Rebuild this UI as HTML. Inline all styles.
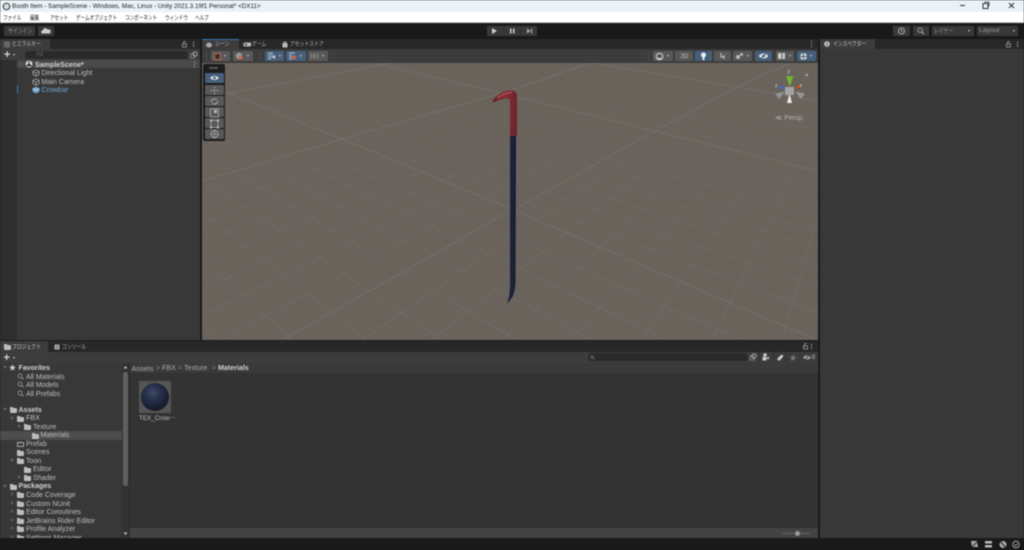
<!DOCTYPE html>
<html lang="ja"><head><meta charset="utf-8"><title>Unity</title>
<style>
html,body{margin:0;padding:0;background:#191919;}
#p{position:relative;width:1024px;height:550px;overflow:hidden;background:#191919;font-family:"Liberation Sans","Noto Sans CJK JP",sans-serif;filter:blur(.4px);}
#p div,#p span.t,#p svg{position:absolute;}
.t{position:absolute;white-space:nowrap;line-height:1;font-size:7.1px;color:#bdbdbd;margin-top:.5px;}
.j{font-size:6.200px;transform:scaleX(.78);transform-origin:left center;margin-top:1px;}
.b{font-weight:bold;color:#d0d0d0;}
.m{font-size:6.200px;color:#222;top:15.500px;transform:scaleX(.74);transform-origin:left center;margin-top:0;}
.btn{background:#383838;top:26px;height:10px;}
.sb{background:#585858;top:51px;height:10px;border-radius:1px;}
.bl{background:#46607c;}
.tb{left:205px;width:19px;height:10px;background:#585858;border-radius:1px;}
.f{width:7px;height:5px;background:#bdbdbd;border-radius:0 1px 1px 1px;}
.f::before{content:"";position:absolute;left:0;top:-1px;width:3px;height:1px;background:#bdbdbd;}
.o{background:none;border:1px solid #aaa;width:5px;height:3px;}
.a{width:0;height:0;border-left:2px solid transparent;border-right:2px solid transparent;border-top:3px solid #5e5e5e;}
.r{width:0;height:0;border-top:2px solid transparent;border-bottom:2px solid transparent;border-left:3px solid #5e5e5e;}
.w{width:0;height:0;border-left:1.500px solid transparent;border-right:1.500px solid transparent;border-top:2px solid #c4c4c4;}
</style></head><body><div id="p">

<!-- title bar -->
<div style="left:0;top:0;width:1024px;height:12px;background:#e9f2f7"></div>
<div style="left:0;top:12px;width:1024px;height:11px;background:#fff"></div>
<div style="left:0;top:22px;width:1024px;height:1px;background:#d0d0d0"></div>
<svg style="left:2px;top:2px" width="9" height="9" viewBox="0 0 9 9"><circle cx="4.500" cy="4.500" r="3.800" fill="#444"/><path d="M4.500 1.500L7 3v3L4.500 7.500 2 6V3z" fill="#ddd"/></svg>
<span class="t" style="left:12px;top:3.500px;font-size:6.300px;color:#222">Booth Item - SampleScene - Windows, Mac, Linux - Unity 2021.3.19f1 Personal* &lt;DX11&gt;</span>
<svg style="left:954px;top:0" width="70" height="12" viewBox="954 0 70 12"><path d="M960 5.500h5" stroke="#333" fill="none"/><rect x="983" y="3.500" width="5" height="5" stroke="#333" fill="none"/><path d="M985 3V2h4v4h-1" stroke="#333" stroke-width=".7" fill="none"/><path d="M1009 3l5 5M1014 3l-5 5" stroke="#333" fill="none"/></svg>
<span class="t m" style="left:3px">ファイル</span>
<span class="t m" style="left:30px">編集</span>
<span class="t m" style="left:50px">アセット</span>
<span class="t m" style="left:76px">ゲームオブジェクト</span>
<span class="t m" style="left:125px">コンポーネント</span>
<span class="t m" style="left:165px">ウィンドウ</span>
<span class="t m" style="left:195px">ヘルプ</span>

<!-- main toolbar -->
<div style="left:0;top:23px;width:1024px;height:16px;background:#191919"></div>
<div class="btn" style="left:4px;width:31px"></div>
<span class="t j" style="left:8px;top:27.500px;color:#999">サインイン</span>
<div class="btn" style="left:38px;width:16px"></div>
<svg style="left:41px;top:27px" width="10" height="8" viewBox="0 0 10 8"><path d="M1.500 6.500a1.500 1.500 0 0 1 .3-3A2.500 2.500 0 0 1 6.500 2.500a2 2 0 0 1 2 4z" fill="#ccc"/></svg>
<div class="btn" style="left:487px;width:50px"></div>
<svg style="left:487px;top:26px" width="50" height="10" viewBox="0 0 50 10"><path d="M5 2v6l5-3z" fill="#ccc"/><path d="M23 2.500h1.500v5H23zM26 2.500h1.500v5H26z" fill="#ccc"/><path d="M40 2.500v5l3.500-2.500zM44 2.500h1.200v5H44z" fill="#aaa"/><path d="M17 0v10M33.500 0v10" stroke="#2a2a2a" stroke-width=".6"/></svg>
<div class="btn" style="left:893px;width:17px"></div>
<svg style="left:897px;top:27px" width="9" height="8" viewBox="0 0 9 8"><circle cx="4.500" cy="4" r="3" fill="none" stroke="#ccc" stroke-width=".8"/><path d="M4.500 2.200V4l1.300.8" stroke="#ccc" stroke-width=".7" fill="none"/></svg>
<div class="btn" style="left:913px;width:16px"></div>
<svg style="left:917px;top:27px" width="8" height="8" viewBox="0 0 8 8"><circle cx="3.200" cy="3.200" r="2.200" fill="none" stroke="#bbb" stroke-width=".8"/><path d="M5 5l2 2" stroke="#bbb"/></svg>
<div class="btn" style="left:932px;width:42px"></div>
<span class="t j" style="left:934px;top:27.500px;color:#999">レイヤー</span>
<div class="w" style="left:968px;top:30px"></div>
<div class="btn" style="left:977px;width:41px"></div>
<span class="t" style="left:979px;top:27.500px;color:#999;font-size:6.800px">Layout</span>
<div class="w" style="left:1013px;top:30px"></div>

<!-- hierarchy -->
<div style="left:0;top:39px;width:201px;height:10px;background:#282828"></div>
<div style="left:0;top:39px;width:50px;height:10px;background:#3c3c3c"></div>
<svg style="left:4px;top:42px" width="6" height="5"><path d="M0 .5h6M0 2.500h6M0 4.500h6" stroke="#aaa" stroke-width=".7"/></svg>
<span class="t j" style="left:12px;top:40.500px;color:#bbb">ヒエラルキー</span>
<svg style="left:181px;top:41px" width="16" height="7" viewBox="0 0 16 7"><rect x="1.500" y="3" width="4" height="3" fill="none" stroke="#aaa" stroke-width=".7"/><path d="M2.500 3V1.500a1 1 0 0 1 2 0" fill="none" stroke="#aaa" stroke-width=".7"/><path d="M12.500 1v1M12.500 3v1M12.500 5v1" stroke="#bbb"/></svg>
<div style="left:0;top:49px;width:201px;height:11px;background:#3c3c3c"></div>
<span class="t" style="left:4px;top:49.500px;font-size:11px;font-weight:bold;color:#d8d8d8;line-height:11px">+</span>
<div class="w" style="left:12.500px;top:54px"></div>
<div style="left:25px;top:51px;width:163px;height:8px;background:#2a2a2a;border-radius:3px"></div>
<span class="t" style="left:36px;top:51.500px;font-size:6.500px;color:#666">All</span>
<svg style="left:190px;top:51px" width="9" height="8" viewBox="0 0 9 8"><rect x=".5" y="3" width="4" height="4" fill="none" stroke="#999" stroke-width=".7"/><circle cx="5" cy="3" r="2.200" fill="none" stroke="#bbb" stroke-width=".8"/></svg>
<div style="left:0;top:60px;width:201px;height:281px;background:#383838"></div>
<div style="left:0;top:60px;width:17px;height:281px;background:#2f2f2f"></div>
<div style="left:17px;top:60px;width:184px;height:8px;background:#4a4a4a"></div>
<div class="a" style="left:19px;top:63px"></div>
<svg style="left:25px;top:60px" width="8" height="8" viewBox="0 0 8 8"><circle cx="4" cy="4" r="3.400" fill="#ddd"/><path d="M4 1v3M1.500 6l2.500-2 2.500 2" stroke="#333" stroke-width="1.100"/></svg>
<span class="t b" style="left:35px;top:61px">SampleScene*</span>
<svg style="left:193px;top:61px" width="3" height="7"><path d="M1.500 0v1M1.500 2.500v1M1.500 5v1" stroke="#bbb"/></svg>
<svg style="left:32px;top:69px" width="8" height="8" viewBox="0 0 8 8"><path d="M4 .8L7.200 2.500v3L4 7.200.8 5.500v-3zM.8 2.500L4 4.200l3.200-1.700M4 4.200v3" fill="none" stroke="#aaa" stroke-width=".7"/></svg>
<span class="t" style="left:41.500px;top:69.500px">Directional Light</span>
<svg style="left:32px;top:78px" width="8" height="8" viewBox="0 0 8 8"><path d="M4 .8L7.200 2.500v3L4 7.200.8 5.500v-3zM.8 2.500L4 4.200l3.200-1.700M4 4.200v3" fill="none" stroke="#aaa" stroke-width=".7"/></svg>
<span class="t" style="left:41.500px;top:78.500px">Main Camera</span>
<div style="left:17px;top:85px;width:1px;height:8px;background:#3d7fb5"></div>
<svg style="left:32px;top:86px" width="8" height="8" viewBox="0 0 8 8"><path d="M4 .6L7.400 2.400v3.300L4 7.400.6 5.700V2.400z" fill="#6ea8d0"/><path d="M.6 2.400L4 4.200l3.400-1.800" stroke="#cde" stroke-width=".7" fill="none"/></svg>
<span class="t" style="left:41.500px;top:86.500px;color:#6fa4d2">Crowbar</span>

<!-- dividers -->
<div style="left:200px;top:39px;width:2px;height:302px;background:#1a1a1a"></div>
<div style="left:818px;top:39px;width:2px;height:499px;background:#1a1a1a"></div>

<!-- scene tabs -->
<div style="left:202px;top:39px;width:616px;height:10px;background:#282828"></div>
<div style="left:202px;top:39px;width:37px;height:10px;background:#3c3c3c"></div>
<div style="left:202px;top:39px;width:37px;height:1px;background:#3a7ab0"></div>
<svg style="left:206px;top:42px" width="6" height="6"><path d="M3 .3L5.800 1.800v2.500L3 5.800.2 4.300V1.800z" fill="#aaa"/></svg>
<span class="t j" style="left:215px;top:41px;color:#c4c4c4">シーン</span>
<svg style="left:243px;top:42px" width="9" height="5"><rect x=".3" y=".5" width="8" height="4" rx="2" fill="#bbb"/><circle cx="3" cy="2.500" r="1" fill="#333"/></svg>
<span class="t j" style="left:252px;top:41px;color:#aaa">ゲーム</span>
<svg style="left:282px;top:41px" width="6" height="7"><path d="M.5 2h5v4.500h-5z" fill="#bbb"/><path d="M2 2V1h2v1" stroke="#bbb" stroke-width=".7" fill="none"/></svg>
<span class="t j" style="left:290px;top:41px;color:#aaa">アセットストア</span>
<svg style="left:810px;top:41px" width="3" height="7"><path d="M1.500 0v1M1.500 2.500v1M1.500 5v1" stroke="#bbb"/></svg>

<!-- scene toolbar -->
<div style="left:202px;top:49px;width:616px;height:14px;background:#3c3c3c"></div>
<div style="left:206px;top:51px;width:1px;height:10px;background:#4a4a4a"></div>
<div class="sb" style="left:211px;width:19px"></div>
<div style="left:214px;top:53px;width:5px;height:5px;border:1px solid #c96a4a;background:#333"></div>
<div class="w" style="left:224px;top:55px"></div>
<div class="sb" style="left:233px;width:20px"></div>
<svg style="left:235px;top:52px" width="9" height="9"><circle cx="4" cy="4" r="3.200" fill="#999"/><circle cx="5.500" cy="5.500" r="2" fill="#c96a4a"/></svg>
<div class="w" style="left:247px;top:55px"></div>
<div style="left:259px;top:51px;width:1px;height:10px;background:#4a4a4a"></div>
<div class="sb bl" style="left:265px;width:19px"></div>
<svg style="left:267px;top:52px" width="9" height="8"><path d="M1 1h5M1 3h5M1 5h5M1 7h3" stroke="#ddd" stroke-width=".8"/><path d="M5 5l3-2v4z" fill="#ddd"/></svg>
<div class="w" style="left:279px;top:55px"></div>
<div class="sb bl" style="left:286px;width:20px"></div>
<svg style="left:288px;top:52px" width="9" height="8"><path d="M1 1h6M1 3h3M1 5h3M1 7h3" stroke="#ddd" stroke-width=".8"/><circle cx="6" cy="5.500" r="2" fill="#c96a4a"/></svg>
<div class="w" style="left:300px;top:55px"></div>
<div class="sb" style="left:308px;width:20px"></div>
<svg style="left:310px;top:52px" width="9" height="8"><path d="M1 1v6M8 1v6M1 3h7M1 5h7M4.500 1v6" stroke="#888" stroke-width=".8"/></svg>
<div class="w" style="left:322px;top:55px"></div>

<div style="left:648px;top:51px;width:1px;height:10px;background:#4a4a4a"></div>
<div class="sb" style="left:653px;width:20px"></div>
<svg style="left:655px;top:52px" width="9" height="9"><circle cx="4.500" cy="4.500" r="3.300" fill="none" stroke="#ddd"/><path d="M2 6a3.300 3.300 0 0 0 5 0z" fill="#ddd"/></svg>
<div class="w" style="left:667px;top:55px"></div>
<div class="sb" style="left:675px;width:18px"></div>
<span class="t" style="left:680.500px;top:53px;color:#c4c4c4;font-size:6px">2D</span>
<div class="sb bl" style="left:695px;width:17px"></div>
<svg style="left:700px;top:52px" width="7" height="9"><circle cx="3.500" cy="3" r="2.500" fill="#eee"/><rect x="2.500" y="5" width="2" height="3" fill="#eee"/></svg>
<div class="sb" style="left:714px;width:17px"></div>
<svg style="left:718px;top:52px" width="9" height="8"><path d="M3 1v4h3M6 3v4" stroke="#bbb" stroke-width="1.200" fill="none"/></svg>
<div class="sb" style="left:733px;width:19px"></div>
<svg style="left:735px;top:52px" width="9" height="8"><circle cx="3" cy="5" r="2" fill="#bbb"/><circle cx="6.500" cy="2.500" r="1.500" fill="#bbb"/></svg>
<div class="w" style="left:747px;top:55px"></div>
<div class="sb bl" style="left:755px;width:17px"></div>
<svg style="left:758px;top:52px" width="11" height="8"><ellipse cx="5.500" cy="4" rx="4.500" ry="2.500" fill="#ddd"/><circle cx="5.500" cy="4" r="1.300" fill="#46607c"/><path d="M2 7.500l7-7" stroke="#46607c"/></svg>
<div class="sb" style="left:776px;width:18px"></div>
<svg style="left:778px;top:53px" width="8" height="6"><rect width="7" height="6" fill="#ccc"/><path d="M4 0v6" stroke="#585858"/></svg>
<div class="w" style="left:789px;top:55px"></div>
<div class="sb bl" style="left:797px;width:19px"></div>
<svg style="left:799px;top:52px" width="9" height="9"><circle cx="4.500" cy="4.500" r="3.500" fill="#ddd"/><path d="M4.500 0v9M0 4.500h9" stroke="#46607c"/></svg>
<div class="w" style="left:810px;top:55px"></div>

<!-- scene view -->
<div style="left:202px;top:63px;width:616px;height:277px;background:#69635c"></div>
<svg style="left:202px;top:63px" width="616" height="277" viewBox="202 63 616 277">
<defs><linearGradient id="g" gradientUnits="userSpaceOnUse" x1="0" y1="63" x2="0" y2="340"><stop offset="0" stop-color="#807a72" stop-opacity="0"/><stop offset=".45" stop-color="#807a72" stop-opacity=".3"/><stop offset="1" stop-color="#807a72" stop-opacity=".55"/></linearGradient>
<linearGradient id="red" x1="0" y1="0" x2="1" y2="0"><stop offset="0" stop-color="#5e2229"/><stop offset=".5" stop-color="#872c35"/><stop offset="1" stop-color="#6a252d"/></linearGradient>
<linearGradient id="blu" x1="0" y1="0" x2="1" y2="0"><stop offset="0" stop-color="#14162a"/><stop offset=".5" stop-color="#20243f"/><stop offset="1" stop-color="#171930"/></linearGradient>
</defs>
<path fill="none" stroke="url(#g)" stroke-width=".6" d="M885-20L-862 340M885-20L-790 340M885-20L-718 340M885-20L-646 340M885-20L-574 340M885-20L-502 340M885-20L-270 340M885-20L-198 340M885-20L-126 340M885-20L-54 340M885-20L18 340M885-20L90 340M885-20L152 340M885-20L222 340M885-20L362 340M885-20L432 340M885-20L502 340M885-20L572 340M885-20L642 340M885-20L712 340M885-20L782 340M885-20L852 340M885-20L922 340M885-20L992 340M-130-45L142 340M-130-45L217 340M-130-45L292 340M-130-45L367 340M-130-45L442 340M-130-45L517 340M-130-45L592 340M-130-45L667 340M-130-45L742 340M-130-45L892 340M-130-45L967 340M-130-45L1042 340M-130-45L1117 340M-130-45L1192 340M-130-45L1267 340M-130-45L1342 340M-130-45L1417 340M-130-45L1492 340M-130-45L1640 340M-130-45L1720 340M-130-45L1800 340M-130-45L1880 340M-130-45L1960 340M-130-45L2040 340M-130-45L2120 340M-130-45L2200 340M-130-45L2280 340"/>
<path fill="none" stroke="#79736b" stroke-width=".7" d="M202 98L392 63M202 181L342 139L509 91L590 63M282 340L419 263L509 211L517 208L655 131L737 87L790 63M229 93L342 139L509 208L817 340M375 63L509 95L655 131L817 171M593 63L737 87L817 101"/>
<!-- crowbar -->
<path d="M510 135L510 285Q510 296 507 304L512.500 297Q515.500 290 515.500 280L516 135z" fill="url(#blu)"/>
<path d="M510 136V102Q510 98 506 98.500Q500 99 494 102.500L492.500 101Q497 94 504 91.500Q511 89.500 514.500 91Q517 92.500 517 97V136z" fill="url(#red)"/>
<path d="M497 98Q504 93 512 92.500" stroke="#a8505a" stroke-width="1.500" fill="none"/>
<!-- gizmo -->
<path d="M786 76h7.500l-3.700 11z" fill="#6fb42c"/>
<path d="M794 89l5-4.500 2 2.500z" fill="#c94a28"/>
<path d="M786 89l-6-4 -1.500 3z" fill="#3a6fd0"/>
<path d="M775 93.500l10 -2 -6 7.500z" fill="#949494"/>
<path d="M805 93.500l-10-2 6 7.500z" fill="#949494"/>
<path d="M787 103h5l-2.500-9.500z" fill="#eaeaea"/>
<rect x="785" y="87" width="9" height="8" fill="#a5a5a5"/>
<rect x="805.500" y="74" width="2.500" height="2" fill="#a9a9a9"/>
<text x="787.500" y="73" font-size="5" fill="#ddd" font-family="Liberation Sans">y</text>
<text x="799.500" y="87" font-size="5" fill="#ddd" font-family="Liberation Sans">x</text>
<text x="775" y="87" font-size="5" fill="#ddd" font-family="Liberation Sans">z</text>
<text x="775" y="120" font-size="7" fill="#b5b0aa" font-family="Liberation Sans">≪ Persp</text>
</svg>

<!-- tool overlay -->
<div style="left:203px;top:64px;width:22px;height:77px;background:#1c1c1c;border-radius:2px"></div>
<div style="left:209px;top:67px;width:9px;height:2px;background:#555"></div>
<div class="tb" style="top:73px;background:#46607c"></div>
<div class="tb" style="top:85px"></div>
<div class="tb" style="top:96px"></div>
<div class="tb" style="top:107px"></div>
<div class="tb" style="top:118px"></div>
<div class="tb" style="top:129px"></div>
<svg style="left:205px;top:73px" width="19" height="66" viewBox="0 0 19 66">
<path d="M5 5q4.500-4 9 0q-4.500 4-9 0z" fill="#e6e6e6"/><circle cx="9.500" cy="5" r="1.400" fill="#46607c"/>
<path d="M9.500 13.500v8M5.500 17.500h8" stroke="#bdbdbd" stroke-width=".7" stroke-dasharray="2 1"/>
<path d="M6 29a4 4 0 0 1 6-2.500M13 28a4 4 0 0 1-6 2.500" stroke="#bdbdbd" fill="none" stroke-width=".8"/>
<rect x="5.500" y="36" width="8" height="8" fill="none" stroke="#bdbdbd" stroke-width=".7"/><rect x="9" y="37" width="3" height="3" fill="#bdbdbd"/>
<rect x="6" y="47.500" width="7" height="7" fill="none" stroke="#bdbdbd" stroke-width=".7"/><path d="M5 46.500h2v2H5zM12 46.500h2v2h-2zM5 53.500h2v2H5zM12 53.500h2v2h-2z" fill="#bdbdbd"/>
<circle cx="9.500" cy="61" r="3.600" fill="none" stroke="#bdbdbd" stroke-width=".7"/><path d="M9.500 57v8M5.500 61h8" stroke="#bdbdbd" stroke-width=".6"/>
</svg>

<!-- inspector -->
<div style="left:820px;top:39px;width:204px;height:10px;background:#282828"></div>
<div style="left:820px;top:39px;width:55px;height:10px;background:#3c3c3c"></div>
<svg style="left:824px;top:41px" width="6" height="6"><circle cx="3" cy="3" r="2.800" fill="#c4c4c4"/><path d="M3 1.500v.8M3 2.800v2" stroke="#333" stroke-width=".8"/></svg>
<span class="t j" style="left:833px;top:41px;color:#c4c4c4">インスペクター</span>
<svg style="left:1005px;top:41px" width="16" height="7" viewBox="0 0 16 7"><rect x="1.500" y="3" width="4" height="3" fill="none" stroke="#aaa" stroke-width=".7"/><path d="M2.500 3V1.500a1 1 0 0 1 2 0" fill="none" stroke="#aaa" stroke-width=".7"/><path d="M12.500 1v1M12.500 3v1M12.500 5v1" stroke="#bbb"/></svg>
<div style="left:820px;top:49px;width:204px;height:489px;background:#383838"></div>

<!-- project panel -->
<div style="left:0;top:340px;width:818px;height:1px;background:#1a1a1a"></div>
<div style="left:0;top:341px;width:818px;height:11px;background:#282828"></div>
<div style="left:0;top:341px;width:48px;height:11px;background:#3c3c3c"></div>
<div class="f" style="left:4px;top:345px"></div>
<span class="t j" style="left:12px;top:343.500px;color:#c4c4c4">プロジェクト</span>
<svg style="left:54px;top:344px" width="6" height="6"><rect x=".5" y=".5" width="5" height="5" fill="#aaa"/><path d="M2 2h2M2 3.500h2" stroke="#333" stroke-width=".6"/></svg>
<span class="t j" style="left:62px;top:343.500px;color:#aaa">コンソール</span>
<svg style="left:802px;top:343px" width="16" height="7" viewBox="0 0 16 7"><rect x="1.500" y="3" width="4" height="3" fill="none" stroke="#aaa" stroke-width=".7"/><path d="M2.500 3V1.500a1 1 0 0 1 2 0" fill="none" stroke="#aaa" stroke-width=".7"/><path d="M9.500 1v1M9.500 3v1M9.500 5v1" stroke="#bbb"/></svg>
<div style="left:0;top:352px;width:818px;height:11px;background:#3c3c3c"></div>
<span class="t" style="left:3.500px;top:352.500px;font-size:11px;font-weight:bold;color:#d8d8d8;line-height:11px">+</span>
<div class="w" style="left:12.500px;top:357px"></div>
<div style="left:588px;top:353px;width:160px;height:8px;background:#2a2a2a;border-radius:3px"></div>
<svg style="left:590px;top:355px" width="6" height="5"><circle cx="2" cy="2" r="1.300" fill="none" stroke="#888" stroke-width=".6"/><path d="M3 3l2 1.500" stroke="#888" stroke-width=".6"/></svg>
<svg style="left:749px;top:352px" width="70" height="11" viewBox="749 352 70 11">
<rect x="750" y="356" width="4" height="4" fill="none" stroke="#999" stroke-width=".7"/><circle cx="754" cy="356" r="2.200" fill="none" stroke="#bbb" stroke-width=".8"/>
<path d="M759.500 352v11M773.500 352v11M786.500 352v11M800 352v11" stroke="#2e2e2e" stroke-width=".6"/>
<circle cx="765" cy="355" r="1.800" fill="#ccc"/><path d="M762.500 357h4v3.500h-4z" fill="#ccc"/><circle cx="768" cy="358" r="1.300" fill="#aaa"/>
<path d="M777 359l4-4 2 0 0 2-4 4z" fill="#ccc"/>
<path d="M793 354.500l1 2.200 2.300.2-1.800 1.500.6 2.300-2.100-1.200-2.100 1.200.6-2.300-1.800-1.500 2.300-.2z" fill="#777"/>
<ellipse cx="807" cy="357.500" rx="3.500" ry="2" fill="#aaa"/><path d="M804 360.500l6-6" stroke="#3c3c3c"/>
</svg>
<span class="t" style="left:811.500px;top:354px;font-size:6.800px;color:#aaa">8</span>

<div style="left:0;top:363px;width:122px;height:175px;background:#383838"></div>
<div style="left:122px;top:363px;width:7px;height:175px;background:#323232"></div>
<div style="left:123px;top:372px;width:5px;height:114px;background:#5f5f5f;border-radius:2px"></div>
<svg style="left:122px;top:365px" width="7" height="5"><path d="M1.500 3.500h4L3.500 1z" fill="#bbb"/></svg>
<svg style="left:122px;top:531px" width="7" height="5"><path d="M1.500 1.500h4L3.500 4z" fill="#bbb"/></svg>
<div style="left:129px;top:363px;width:1px;height:175px;background:#2b2b2b"></div>
<div style="left:130px;top:363px;width:688px;height:165px;background:#333"></div>
<div style="left:130px;top:363px;width:688px;height:10px;background:#3a3a3a"></div>
<div style="left:130px;top:528px;width:688px;height:10px;background:#434343"></div>
<div style="left:782px;top:533px;width:28px;height:1px;background:#666"></div>
<div style="left:795px;top:530.500px;width:5px;height:5px;background:#9a9a9a;border-radius:50%"></div>

<span class="t" style="left:131.500px;top:364.500px;font-size:7.300px;color:#aaa">Assets</span>
<span class="t" style="left:156px;top:364.500px;color:#888">&gt;</span>
<span class="t" style="left:162px;top:364.500px;color:#aaa">FBX</span>
<span class="t" style="left:178px;top:364.500px;color:#888">&gt;</span>
<span class="t" style="left:184px;top:364.500px;color:#aaa">Texture</span>
<span class="t" style="left:212px;top:364.500px;color:#888">&gt;</span>
<span class="t b" style="left:218px;top:364.500px">Materials</span>

<div style="left:139px;top:381px;width:32px;height:32px;background:#555"></div>
<div style="left:140.500px;top:382.500px;width:28px;height:28px;border-radius:50%;background:radial-gradient(circle at 42% 35%,#3f4b68 0,#28314b 30%,#181e30 65%,#0e1019 100%)"></div>
<span class="t" style="left:139px;top:415px;font-size:6.300px;color:#bbb">TEX_Crow⋯</span>

<div style="left:0;top:431px;width:122px;height:8.500px;background:#4d4d4d"></div>

<div class="a" style="left:3px;top:366px;border-top-color:#666"></div>
<svg style="left:9px;top:364px" width="7" height="7"><path d="M3.500 .3l1 2.200 2.300.2-1.800 1.500.6 2.300-2.100-1.200-2.100 1.200.6-2.300L.2 2.700l2.300-.2z" fill="#ccc"/></svg>
<span class="t b" style="left:18.500px;top:364px">Favorites</span>
<svg style="left:17px;top:373px" width="7" height="7"><circle cx="3" cy="3" r="2" fill="none" stroke="#aaa" stroke-width=".7"/><path d="M4.500 4.500l2 2" stroke="#aaa" stroke-width=".8"/></svg>
<span class="t" style="left:26px;top:373px">All Materials</span>
<svg style="left:17px;top:381px" width="7" height="7"><circle cx="3" cy="3" r="2" fill="none" stroke="#aaa" stroke-width=".7"/><path d="M4.500 4.500l2 2" stroke="#aaa" stroke-width=".8"/></svg>
<span class="t" style="left:26px;top:381.500px">All Models</span>
<svg style="left:17px;top:390px" width="7" height="7"><circle cx="3" cy="3" r="2" fill="none" stroke="#aaa" stroke-width=".7"/><path d="M4.500 4.500l2 2" stroke="#aaa" stroke-width=".8"/></svg>
<span class="t" style="left:26px;top:390px">All Prefabs</span>

<div class="a" style="left:3px;top:408px;border-top-color:#666"></div>
<div class="f" style="left:10px;top:408px"></div>
<span class="t b" style="left:18.500px;top:406px">Assets</span>
<div class="a" style="left:10px;top:417px;border-top-color:#666"></div>
<div class="f" style="left:17px;top:416.500px"></div>
<span class="t" style="left:26px;top:414.500px">FBX</span>
<div class="a" style="left:17px;top:425px;border-top-color:#666"></div>
<div class="f" style="left:24px;top:425px"></div>
<span class="t" style="left:33px;top:423px">Texture</span>
<div class="f" style="left:32px;top:433.500px"></div>
<span class="t" style="left:40.500px;top:431.500px">Materials</span>
<div class="f o" style="left:17px;top:442px"></div>
<span class="t" style="left:26px;top:440px">Prefab</span>
<div class="f" style="left:17px;top:450.500px"></div>
<span class="t" style="left:26px;top:448.500px">Scenes</span>
<div class="a" style="left:10px;top:459px;border-top-color:#666"></div>
<div class="f" style="left:17px;top:459px"></div>
<span class="t" style="left:26px;top:457px">Toon</span>
<div class="f" style="left:24px;top:467.500px"></div>
<span class="t" style="left:33px;top:465.500px">Editor</span>
<div class="r" style="left:18px;top:475px"></div>
<div class="f" style="left:24px;top:476px"></div>
<span class="t" style="left:33px;top:474px">Shader</span>
<div class="a" style="left:3px;top:485px;border-top-color:#666"></div>
<div class="f" style="left:10px;top:485px"></div>
<span class="t b" style="left:18.500px;top:482.500px">Packages</span>
<div class="r" style="left:11px;top:492px"></div>
<div class="f" style="left:17px;top:493px"></div>
<span class="t" style="left:26px;top:491.500px">Code Coverage</span>
<div class="r" style="left:11px;top:500.500px"></div>
<div class="f" style="left:17px;top:501.500px"></div>
<span class="t" style="left:26px;top:500px">Custom NUnit</span>
<div class="r" style="left:11px;top:509px"></div>
<div class="f" style="left:17px;top:510px"></div>
<span class="t" style="left:26px;top:508.500px">Editor Coroutines</span>
<div class="r" style="left:11px;top:517.500px"></div>
<div class="f" style="left:17px;top:518.500px"></div>
<span class="t" style="left:26px;top:517px">JetBrains Rider Editor</span>
<div class="r" style="left:11px;top:526px"></div>
<div class="f" style="left:17px;top:527px"></div>
<span class="t" style="left:26px;top:525.500px">Profile Analyzer</span>
<div class="r" style="left:11px;top:534.500px"></div>
<div class="f" style="left:17px;top:535.500px"></div>
<span class="t" style="left:26px;top:534px">Settings Manager</span>

<!-- status bar -->
<div style="left:0;top:538px;width:1024px;height:12px;background:#191919"></div>
<svg style="left:968px;top:539px" width="56" height="10" viewBox="968 539 56 10">
<path d="M971 541l6 0 1 6-6 0z" fill="#aaa"/><path d="M972 547l6-6" stroke="#222"/>
<path d="M985 541h7v2.500h-7zM985 545h7v2.500h-7z" fill="#bbb"/>
<circle cx="1003" cy="544.500" r="3.500" fill="#aaa"/><path d="M1000 541l6 7" stroke="#222"/>
<circle cx="1016" cy="544.500" r="3.300" fill="none" stroke="#bbb" stroke-width=".8"/><path d="M1014.500 544.500l1.200 1.200 2-2.200" stroke="#bbb" stroke-width=".8" fill="none"/>
</svg>
</div></body></html>
